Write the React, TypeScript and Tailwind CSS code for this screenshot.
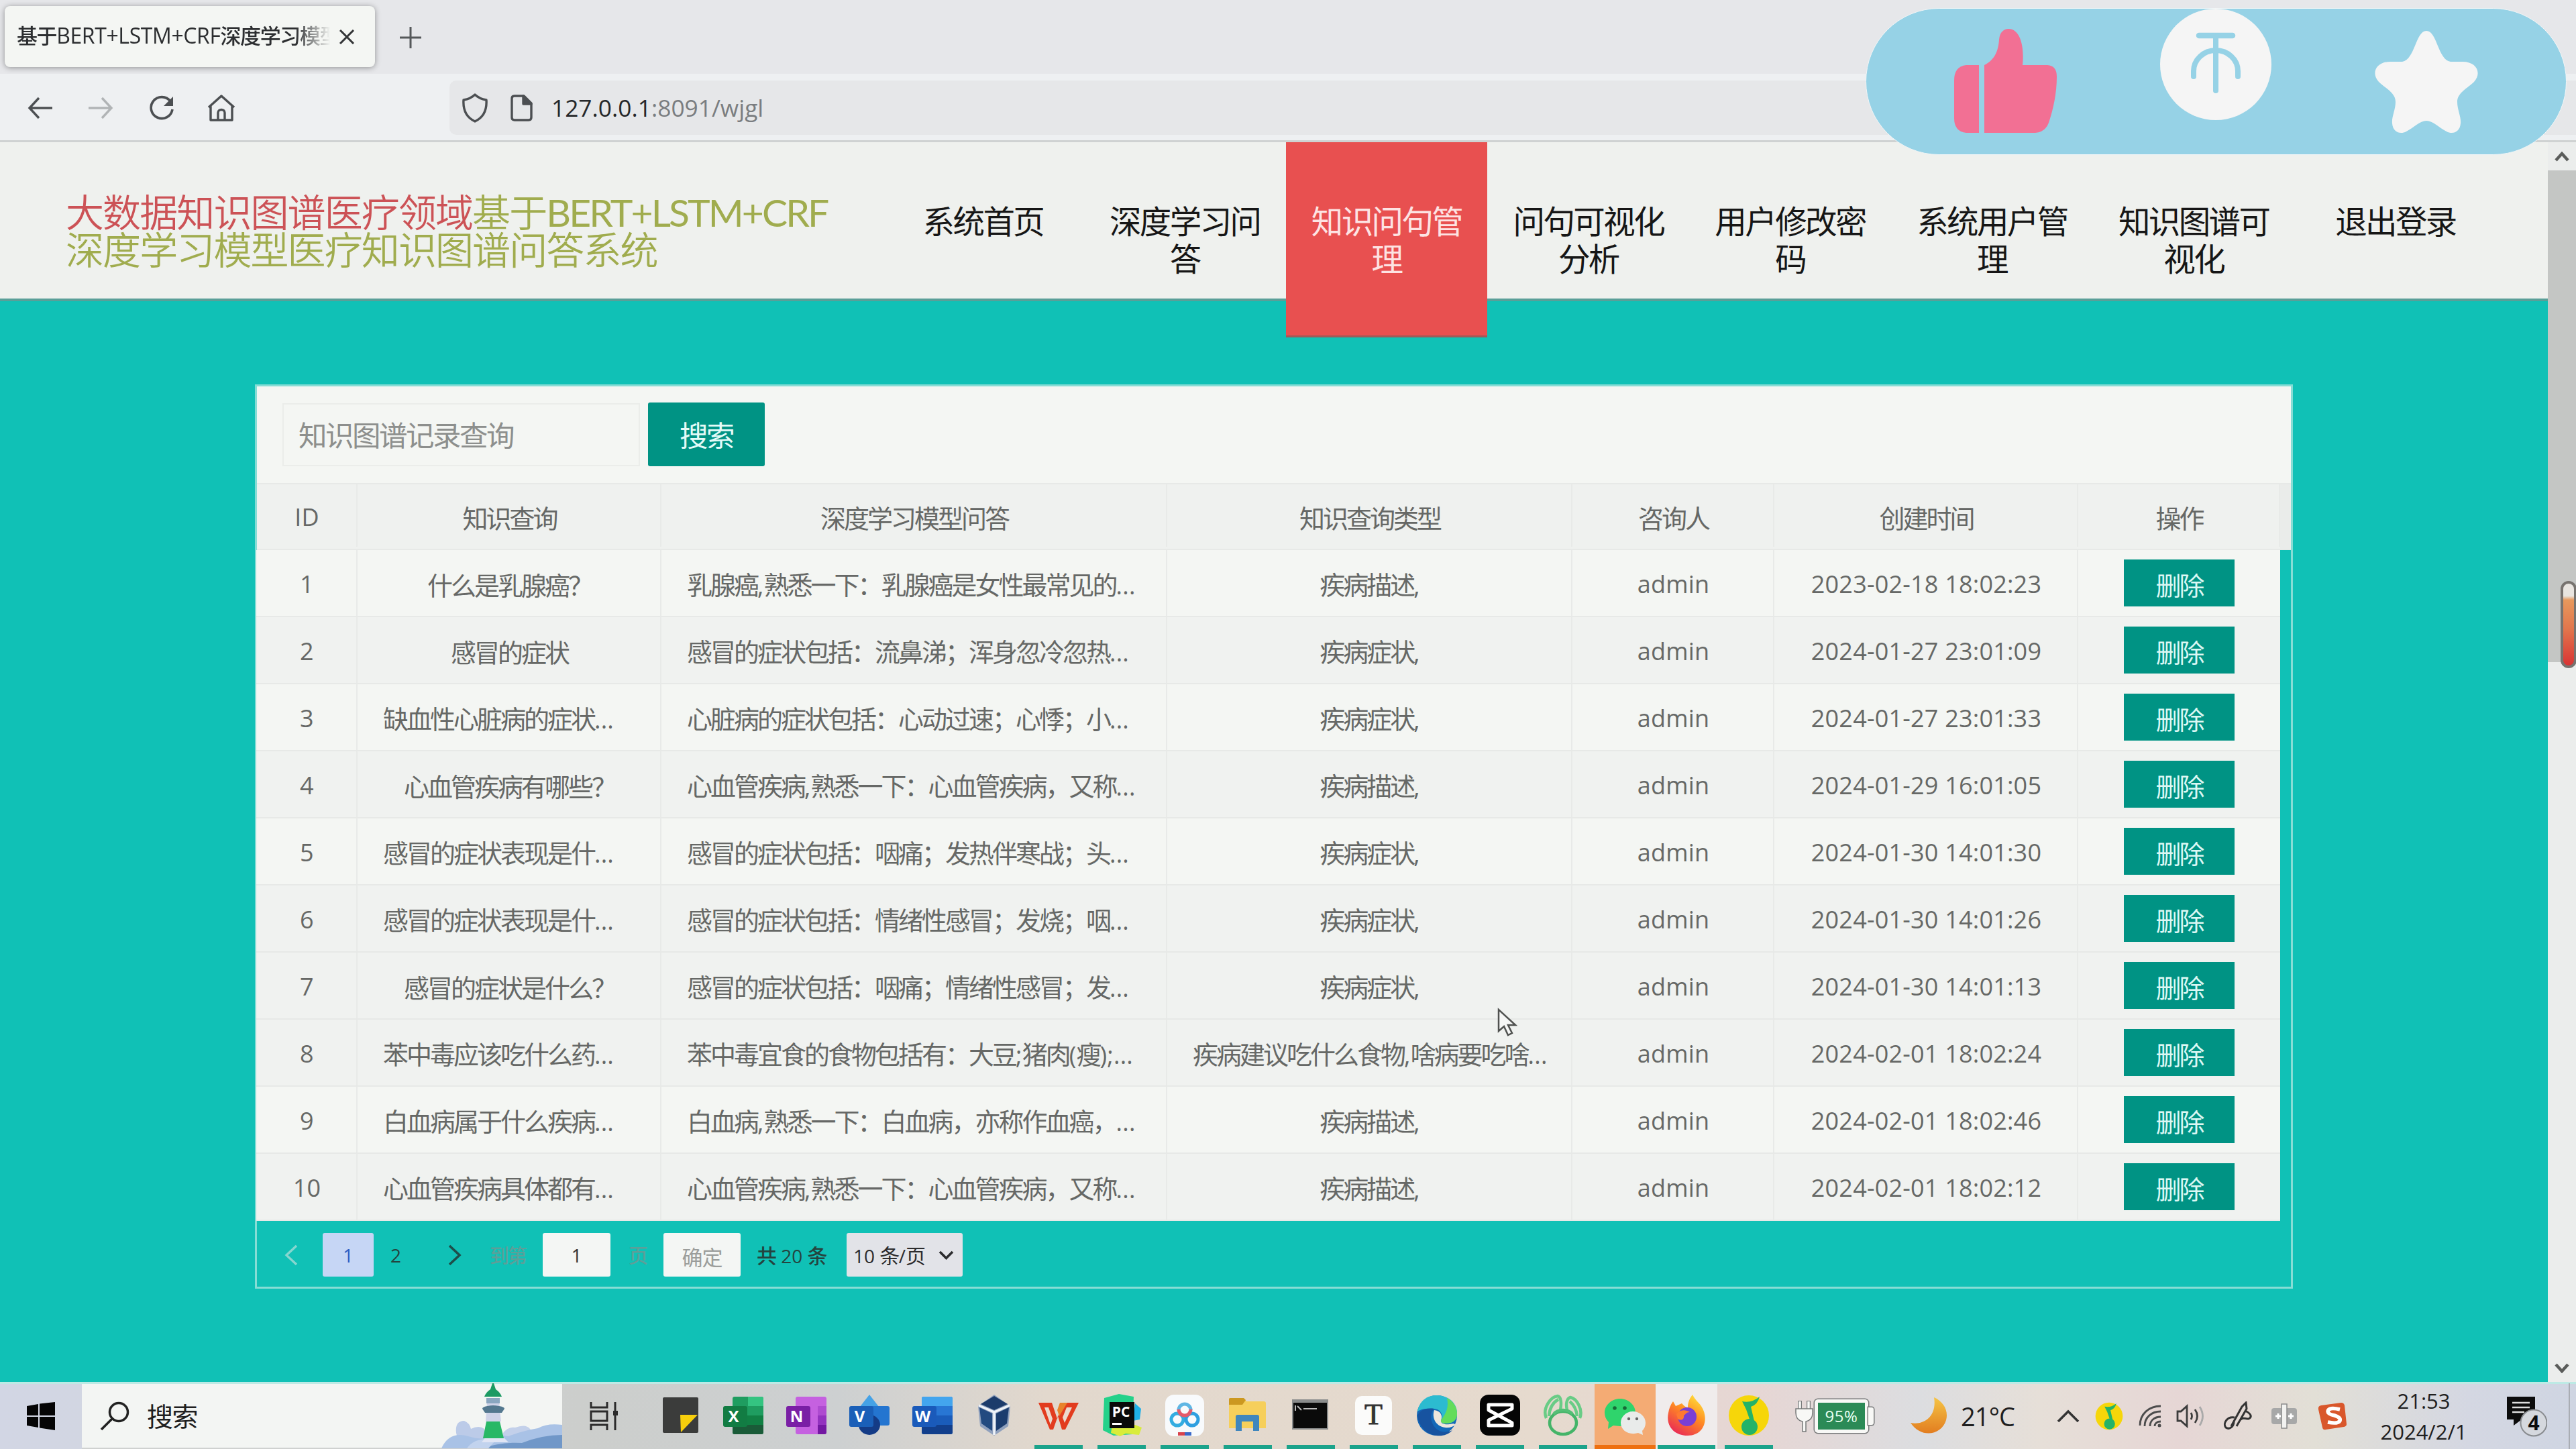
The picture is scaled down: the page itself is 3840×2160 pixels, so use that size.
import React from "react";

const CJK = "font-['Noto_Sans_CJK_SC',sans-serif]";
const LATIN = "font-['Open_Sans','Noto_Sans',sans-serif]";

/* Chinese runs are set slightly larger and tighter than the Latin runs beside them. */
function Mixed({ text, cjk, latin }: { text: string; cjk: string; latin: string }) {
  const runs = text.match(/[\x20-\x7e]+|[^\x20-\x7e]+/g) ?? [];
  return (
    <span>
      {runs.map((run, i) => (
        <span key={i} className={/^[\x20-\x7e]/.test(run) ? `${LATIN} ${latin}` : `${CJK} ${cjk}`}>
          {run}
        </span>
      ))}
    </span>
  );
}

const NAV = [
  "系统首页",
  "深度学习问答",
  "知识问句管理",
  "问句可视化分析",
  "用户修改密码",
  "系统用户管理",
  "知识图谱可视化",
  "退出登录",
];

const HEAD = ["ID", "知识查询", "深度学习模型问答", "知识查询类型", "咨询人", "创建时间", "操作"];

const ROWS: string[][] = [
  ["1", "什么是乳腺癌？", "乳腺癌,熟悉一下：乳腺癌是女性最常见的...", "疾病描述,", "admin", "2023-02-18 18:02:23"],
  ["2", "感冒的症状", "感冒的症状包括：流鼻涕；浑身忽冷忽热...", "疾病症状,", "admin", "2024-01-27 23:01:09"],
  ["3", "缺血性心脏病的症状...", "心脏病的症状包括：心动过速；心悸；小...", "疾病症状,", "admin", "2024-01-27 23:01:33"],
  ["4", "心血管疾病有哪些？", "心血管疾病,熟悉一下：心血管疾病，又称...", "疾病描述,", "admin", "2024-01-29 16:01:05"],
  ["5", "感冒的症状表现是什...", "感冒的症状包括：咽痛；发热伴寒战；头...", "疾病症状,", "admin", "2024-01-30 14:01:30"],
  ["6", "感冒的症状表现是什...", "感冒的症状包括：情绪性感冒；发烧；咽...", "疾病症状,", "admin", "2024-01-30 14:01:26"],
  ["7", "感冒的症状是什么？", "感冒的症状包括：咽痛；情绪性感冒；发...", "疾病症状,", "admin", "2024-01-30 14:01:13"],
  ["8", "苯中毒应该吃什么药...", "苯中毒宜食的食物包括有：大豆;猪肉(瘦);...", "疾病建议吃什么食物,啥病要吃啥...", "admin", "2024-02-01 18:02:24"],
  ["9", "白血病属于什么疾病...", "白血病,熟悉一下：白血病，亦称作血癌，...", "疾病描述,", "admin", "2024-02-01 18:02:46"],
  ["10", "心血管疾病具体都有...", "心血管疾病,熟悉一下：心血管疾病，又称...", "疾病描述,", "admin", "2024-02-01 18:02:12"],
];

const GRID = "grid grid-cols-[151px_453px_754px_604px_301px_453px_301px]";

function Cell({ text }: { text: string }) {
  const clipped = text.endsWith("...");
  return (
    <div
      className={`flex items-center overflow-hidden whitespace-pre border-r-2 border-[#e8eae8] pl-[38px] pr-[36px] pt-[4px] ${
        clipped ? "justify-start" : "justify-center"
      }`}
    >
      <Mixed text={text} cjk="text-[38px] tracking-[-3px]" latin="text-[36px] tracking-[0.2px]" />
    </div>
  );
}

function BrowserChrome() {
  return (
    <>
      <div className="flex h-[110px] shrink-0 items-start bg-[#e6e7ea]">
        <div className="ml-[7px] mt-[9px] flex h-[91px] w-[552px] items-center rounded-[8px] bg-[#f4f6f3] pl-[18px] shadow-[0_1px_8px_rgba(0,0,0,0.38)]">
          <div className="w-[472px] overflow-hidden whitespace-nowrap pt-[2px] font-medium leading-[60px] text-[#2c2e30] [mask-image:linear-gradient(90deg,#000_88%,transparent_99%)]">
            <Mixed text="基于BERT+LSTM+CRF深度学习模型" cjk="text-[31px] tracking-[-1.4px]" latin="text-[32px] tracking-[-0.4px]" />
          </div>
          <svg className="ml-[8px] h-[22px] w-[24px]" viewBox="0 0 24 22" fill="none" stroke="#333537" strokeWidth="3">
            <path d="M2 1 22 21M22 1 2 21" />
          </svg>
        </div>
        <svg className="ml-[37px] mt-[40px] h-[32px] w-[32px]" viewBox="0 0 32 32" fill="none" stroke="#55585a" strokeWidth="3">
          <path d="M16 0v32M0 16h32" />
        </svg>
      </div>
      <div className="flex h-[102px] shrink-0 items-center border-b-[3px] border-[#cfd2d2] bg-[#eef0f2] pt-[2px]">
        <svg className="ml-[41px] h-[34px] w-[38px]" viewBox="0 0 38 34" fill="none" stroke="#4c4f52" strokeWidth="3.4">
          <path d="M17 2 3 17l14 15M3 17h34" />
        </svg>
        <svg className="ml-[52px] h-[34px] w-[38px]" viewBox="0 0 38 34" fill="none" stroke="#b1b4b6" strokeWidth="3.4">
          <path d="M21 2l14 15-14 15M35 17H1" />
        </svg>
        <svg className="ml-[52px] h-[40px] w-[40px]" viewBox="0 0 40 40" fill="none" stroke="#4c4f52" strokeWidth="3.6">
          <path d="M33 10A16 16 0 1 0 36 22" />
          <path d="M37 3v14H23z" fill="#4c4f52" stroke="none" />
        </svg>
        <svg className="ml-[48px] h-[42px] w-[42px]" viewBox="0 0 42 42" fill="none" stroke="#4c4f52" strokeWidth="3.4" strokeLinejoin="round">
          <path d="M2 20 21 3l19 17M5 18v21h32V18M16 39V28c0-6 10-6 10 0v11" />
        </svg>
        <div className="ml-[319px] flex h-[81px] flex-1 items-center rounded-l-[10px] bg-[#e6e7e9]">
          <svg className="ml-[18px] h-[44px] w-[40px]" viewBox="0 0 40 44" fill="none" stroke="#4c4f52" strokeWidth="3.4" strokeLinejoin="round">
            <path d="M20 2c5 5 11 7 17 8 1 15-4 26-17 32C7 36 2 25 3 10c6-1 12-3 17-8z" />
          </svg>
          <svg className="ml-[32px] h-[40px] w-[34px]" viewBox="0 0 34 40" fill="none" stroke="#4c4f52" strokeWidth="3.4" strokeLinejoin="round">
            <path d="M7 2h14l11 11v21q0 4-4 4H7q-4 0-4-4V6q0-4 4-4z" />
            <path d="M20 2v12h12z" fill="#4c4f52" />
          </svg>
          <span className={`ml-[28px] text-[35.3px] leading-none text-[#25272a] ${LATIN}`}>
            127.0.0.1<span className="text-[#7a7d80]">:8091/wjgl</span>
          </span>
        </div>
      </div>
    </>
  );
}

function SiteHeader() {
  return (
    <header className="relative z-10 flex h-[237px] shrink-0 border-b-[4px] border-[#5a9f98] bg-[#eff1ee]">
      <div className="ml-[98px] mt-[73px] w-[1217px] whitespace-nowrap font-[350] leading-[56px]">
        <div className="h-[56px]">
          <span className={`text-[#cc5256] ${CJK} text-[57px] tracking-[-1.9px]`}>大数据知识图谱医疗领域</span>
          <span className="text-[#a0ac4e]">
            <span className={`${CJK} text-[57px] tracking-[-1.9px]`}>基于</span>
            <span className="font-['Lato',sans-serif] text-[57px] font-normal tracking-[-2.9px]">BERT+LSTM+CRF</span>
          </span>
        </div>
        <div className={`h-[56px] text-[#a0ac4e] ${CJK} text-[57px] tracking-[-1.9px]`}>深度学习模型医疗知识图谱问答系统</div>
      </div>
      <nav className="flex">
        {NAV.map((label) => {
          const active = label === "知识问句管理";
          return (
            <div
              key={label}
              className={`w-[300.8px] px-[34px] pt-[88px] text-center text-[47.5px] leading-[56px] tracking-[-2.6px] ${CJK} ${
                active ? "h-[291px] border-b-[3px] border-[#a05a58] bg-[#e85050] text-[#fde3e3]" : "h-[232px] text-[#161616]"
              }`}
            >
              {label}
            </div>
          );
        })}
      </nav>
    </header>
  );
}

function Pager() {
  return (
    <div className={`flex h-[99px] items-center pt-[2px] leading-none text-[#24443f] ${LATIN} text-[28px]`}>
      <svg className="ml-[41px] h-[32px] w-[20px]" viewBox="0 0 20 32" fill="none" stroke="#86d6cf" strokeWidth="3.4">
        <path d="M18 2 3 16l15 14" />
      </svg>
      <div className="ml-[37px] flex h-[65px] w-[76px] items-center justify-center rounded-[3px] bg-[#c6d6f5] text-[#2f5fc4]">1</div>
      <div className="ml-[25px] w-[18px]">2</div>
      <svg className="ml-[67px] h-[32px] w-[22px]" viewBox="0 0 22 32" fill="none" stroke="#1e4f4a" strokeWidth="3.6">
        <path d="M3 2l15 14L3 30" />
      </svg>
      <div className={`ml-[41px] w-[56px] whitespace-nowrap text-[29px] font-medium tracking-[-2px] text-[#5c9f99] ${CJK}`}>到第</div>
      <div className="ml-[23px] flex h-[65px] w-[101px] items-center justify-center rounded-[3px] bg-[#f4f6f4] text-[#333]">1</div>
      <div className={`ml-[27px] w-[30px] text-[29px] font-medium text-[#5c9f99] ${CJK}`}>页</div>
      <div className={`ml-[22px] flex h-[65px] w-[115px] items-center justify-center rounded-[3px] bg-[#f4f6f4] pt-[4px] text-[31px] tracking-[-1px] text-[#9b9d9b] ${CJK}`}>
        确定
      </div>
      <div className="ml-[24px] w-[111px] whitespace-pre font-medium">
        <Mixed text="共 20 条" cjk="text-[30px] tracking-[-1px]" latin="text-[28px]" />
      </div>
      <div className="ml-[23px] flex h-[65px] w-[173px] items-center whitespace-pre rounded-[3px] bg-[#e2e3e8] pl-[10px] text-[#2c2c2e]">
        <Mixed text="10 条/页" cjk="text-[30px] tracking-[-1.6px]" latin="text-[28px]" />
        <svg className="ml-auto mr-[13px] h-[14px] w-[23px]" viewBox="0 0 23 14" fill="none" stroke="#2c2c2e" strokeWidth="3.6">
          <path d="M2 2l9.500 9.500L21 2" />
        </svg>
      </div>
    </div>
  );
}

function Panel() {
  return (
    <section className="ml-[380px] mt-[124px] h-[1348px] w-[3038px] border-[3px] border-[#86ddd5]">
      <div className="flex h-[146px] items-start border-b-2 border-[#e7e9e7] bg-[#f4f6f3]">
        <div className={`ml-[38px] mt-[25px] flex h-[94px] w-[533px] items-center border-2 border-[#ebedea] pb-[1px] pl-[22px] text-[42.5px] leading-none tracking-[-2.5px] text-[#8d8f8d] ${CJK}`}>
          知识图谱记录查询
        </div>
        <div className={`ml-[12px] mt-[24px] flex h-[95px] w-[174px] items-center justify-center rounded-[3px] bg-[#009384] text-[42.500px] leading-none tracking-[-2.500px] text-[#e4fbf8] ${CJK}`}>
          搜索
        </div>
      </div>
      <div className="flex h-[98px] border-b-2 border-[#e7e9e7] bg-[#eff1ef] pb-[3px] leading-none text-[#666866]">
        <div className={`${GRID} -mb-[3px] -ml-px pb-[3px]`}>
          {HEAD.map((h) => (
            <Cell key={h} text={h} />
          ))}
        </div>
        <div className="-mb-[3px] flex-1 bg-[#eaecea]" />
      </div>
      {ROWS.map((row, i) => (
        <div key={row[0]} className="flex h-[100px] leading-none text-[#666866]">
          <div className={`${GRID} -ml-px border-b-2 border-[#e7e9e7] ${i % 2 === 1 || i === 6 ? "bg-[#f0f2f0]" : "bg-[#f4f6f3]"}`}>
            {row.map((c, j) => (
              <Cell key={j} text={c} />
            ))}
            <div className="flex items-center justify-center">
              <div className={`flex h-[70px] w-[165px] items-center justify-center bg-[#009384] pt-[4px] text-[38px] tracking-[-3px] text-[#dcf8f4] ${CJK}`}>删除</div>
            </div>
          </div>
        </div>
      ))}
      <Pager />
    </section>
  );
}

function PageScrollbar() {
  return (
    <div className="flex w-[42px] flex-col items-center bg-[#ebedec]">
      <div className="flex h-[42px] items-center">
        <svg className="h-[15px] w-[22px]" viewBox="0 0 22 15" fill="none" stroke="#5a5c5a" strokeWidth="4.5">
          <path d="M2 13 11 3l9 10" />
        </svg>
      </div>
      <div className="h-[733px] w-full bg-[#c4c6c4]" />
      <div className="mt-auto flex h-[42px] items-center">
        <svg className="h-[15px] w-[22px]" viewBox="0 0 22 15" fill="none" stroke="#5a5c5a" strokeWidth="4.5">
          <path d="M2 2l9 10 9-10" />
        </svg>
      </div>
    </div>
  );
}

function Tile({ letter, color }: { letter: string; color: string }) {
  return (
    <>
      <rect x="0" y="18" width="36" height="31" rx="3" fill={color} />
      <text x="15.500" y="42" textAnchor="middle" fontFamily="Open Sans, sans-serif" fontWeight="700" fontSize="24" fill="#fff">
        {letter}
      </text>
    </>
  );
}

const ICONS: { name: string; running: boolean; art: React.ReactNode }[] = [
  {
    name: "notes",
    running: false,
    art: (
      <>
        <rect x="4" y="5" width="53" height="53" rx="2" fill="#3b3c3b" />
        <path d="M30 31h26L31 57z" fill="#f7cf0c" />
      </>
    ),
  },
  {
    name: "excel",
    running: false,
    art: (
      <>
        <rect x="14" y="4" width="46" height="56" rx="3" fill="#1f9d60" />
        <path d="M37 4h20q3 0 3 3v11H37z" fill="#34c481" />
        <path d="M14 32h46v14H14z" fill="#118044" />
        <path d="M14 46h46v11q0 3-3 3H17q-3 0-3-3z" fill="#1a5b38" />
        <Tile letter="X" color="#127c43" />
      </>
    ),
  },
  {
    name: "onenote",
    running: false,
    art: (
      <>
        <rect x="14" y="4" width="46" height="56" rx="3" fill="#c561e0" />
        <path d="M47 18h13v14H47z" fill="#ae4bd0" />
        <path d="M47 32h13v14H47z" fill="#9332bf" />
        <path d="M47 46h13v11q0 3-3 3H47z" fill="#7318a2" />
        <Tile letter="N" color="#7a1fa5" />
      </>
    ),
  },
  {
    name: "visio",
    running: false,
    art: (
      <>
        <path d="M30 1 48 24 30 44 12 24z" fill="#45a2e6" />
        <rect x="30" y="18" width="30" height="29" rx="3" fill="#2475d0" />
        <ellipse cx="30" cy="46" rx="16" ry="15" fill="#143b86" />
        <Tile letter="V" color="#1a5fb8" />
      </>
    ),
  },
  {
    name: "word",
    running: false,
    art: (
      <>
        <rect x="14" y="4" width="46" height="56" rx="3" fill="#2876d4" />
        <path d="M17 4h40q3 0 3 3v11H14V7q0-3 3-3z" fill="#43a5ee" />
        <path d="M14 32h46v14H14z" fill="#1a5cba" />
        <path d="M14 46h46v11q0 3-3 3H17q-3 0-3-3z" fill="#123f8c" />
        <Tile letter="W" color="#1a5aba" />
      </>
    ),
  },
  {
    name: "virtualbox",
    running: false,
    art: (
      <>
        <path d="M4 18 28 1l24 17-3 30-21 14L7 48z" fill="#8fa0bd" />
        <path d="M28 3 48 15 28 24 8 15z" fill="#1c3b6b" />
        <path d="M6 20l19 9v26L9 44z" fill="#224a80" />
        <path d="M50 20l-19 9v26l16-11z" fill="#1b3c6e" />
        <path d="M5 17l23 10 23-10M28 27v34" fill="none" stroke="#eef2f8" strokeWidth="3.500" />
      </>
    ),
  },
  {
    name: "wps",
    running: true,
    art: (
      <>
        <path d="M0 13h20l8 24 8-24h24L40 53h-5l-6-20-7 20h-5z" fill="#e23c1f" />
        <path d="M9 20h6l6 17-3 9z" fill="#ecd9cd" />
        <path d="M42 20h8L39 43l-3-8z" fill="#ecd9cd" />
        <path d="M32 13h11L31 33l-3-9z" fill="#e8832c" />
      </>
    ),
  },
  {
    name: "pycharm",
    running: true,
    art: (
      <>
        <path d="M4 6 26 0l22 4-2 56-28 2L2 54z" fill="#24d18a" />
        <path d="M50 14l9 8-2 16-10 2z" fill="#1fb0e8" />
        <path d="M16 46h34l10 4-4 11-20-2-8 4-14-5z" fill="#d9ec3a" />
        <rect x="12" y="12" width="37" height="39" fill="#0a0a0a" />
        <text x="29" y="34" textAnchor="middle" fontFamily="Open Sans, sans-serif" fontWeight="700" fontSize="21" fill="#fff">
          PC
        </text>
        <path d="M16 43h14v3H16z" fill="#fff" />
      </>
    ),
  },
  {
    name: "netdisk",
    running: true,
    art: (
      <>
        <rect x="1" y="1" width="58" height="62" rx="13" fill="#f8fafc" />
        <g fill="none" strokeWidth="5">
          <circle cx="19" cy="38" r="9" stroke="#34ace0" />
          <circle cx="41" cy="38" r="9" stroke="#2f9fe0" />
          <path d="M21 24a9 9 0 0 1 18 0" stroke="#5fb6e4" />
          <path d="M21 23a9 9 0 0 0 18 0" stroke="#e65a6a" />
        </g>
        <path d="M20 57h10v5H20z" fill="#d8434c" />
        <path d="M30 57h10v5H30z" fill="#3a68c8" />
      </>
    ),
  },
  {
    name: "folder",
    running: true,
    art: (
      <>
        <path d="M2 8q0-2 2-2h20l4 5h26q3 0 3 3v37H2z" fill="#f6cf5b" />
        <path d="M2 8q0-2 2-2h20l3 3-5 7H2z" fill="#cc9820" />
        <path d="M12 55V34q0-3 3-3h29q3 0 3 3v21h-9V41H21v14z" fill="#3f86bd" />
      </>
    ),
  },
  {
    name: "terminal",
    running: true,
    art: (
      <>
        <rect x="2" y="8" width="54" height="45" fill="#8a8c8c" />
        <rect x="4" y="13" width="50" height="38" fill="#0a0a0a" />
        <path d="M7 17v8M10 18l6 6M19 22h20" stroke="#bbb" strokeWidth="2" fill="none" />
      </>
    ),
  },
  {
    name: "typora",
    running: true,
    art: (
      <>
        <rect x="2" y="3" width="55" height="58" rx="10" fill="#fbfbfa" />
        <text x="29.500" y="45" textAnchor="middle" fontFamily="Liberation Serif, serif" fontSize="44" fill="#333" stroke="#333">
          T
        </text>
      </>
    ),
  },
  {
    name: "edge",
    running: true,
    art: (
      <>
        <circle cx="30" cy="32" r="30" fill="#1468b8" />
        <path d="M1 26C4 10 16 1 31 2c19 1 30 14 29 28 0 9-7 14-16 14-6 0-9-2-8-5 4-6 1-16-10-17-11-1-20 0-25 4z" fill="#2cbbd0" />
        <path d="M45 6c10 5 15 14 15 24 0 9-7 14-16 14-6 0-9-2-8-5 8-10 12-20 9-33z" fill="#63dc5a" />
        <path d="M26 22c-8 8-6 26 8 33 8 3 15 1 19-1-6 7-15 9-24 8C14 60 4 48 1 34c1-9 12-14 25-12z" fill="#1753a0" />
        <path d="M26 24c-4 11 2 24 16 26 6 1 12-1 15-4 0-2-3-2-8-1-8 1-14-1-13-6 3-6 0-14-10-15z" fill="#eee6dc" />
      </>
    ),
  },
  {
    name: "capcut",
    running: true,
    art: (
      <>
        <rect x="0" y="1" width="60" height="61" rx="13" fill="#050505" />
        <path d="M48 19v-3H13v8l35 19v4H13v-8l35-17z" fill="none" stroke="#fff" strokeWidth="5" strokeLinejoin="round" />
      </>
    ),
  },
  {
    name: "green-ring",
    running: true,
    art: (
      <g fill="none" strokeWidth="4.500">
        <path d="M5 36C-1 22 11 4 22 3c5 1 6 10 4 21M9 33C10 20 16 12 23 8" stroke="#69cc86" />
        <path d="M55 36c5-12-4-29-14-31-6 2-7 10-5 19M51 33c-1-10-5-17-11-22" stroke="#69cc86" />
        <ellipse cx="30" cy="43" rx="20" ry="17" stroke="#44b468" />
        <path d="M16 30C22 22 38 22 44 30" stroke="#55bf76" />
      </g>
    ),
  },
];

function MusicNote({ className }: { className: string }) {
  return (
    <svg className={className} viewBox="0 0 60 62">
      <circle cx="30" cy="31" r="30" fill="#f6d60a" />
      <path d="M20 10q14 3 26-7-3 12-13 15l7 30h-5L26 22z" fill="#24b368" />
      <circle cx="31" cy="48" r="12" fill="#24b368" />
    </svg>
  );
}

function Lighthouse() {
  return (
    <svg className="ml-auto h-[97px] w-[180px]" viewBox="0 0 180 97">
      <path d="M22 74q-2-18 12-18 8 3 10 12 12-6 20 0l2 22H26z" fill="#bccbe8" />
      <path d="M92 74q8-10 18-8 16-6 22 2 6 6 0 12l-8 14H92z" fill="#c3d0ea" />
      <path d="M0 97q12-26 40-18 20 6 30 2 12-6 30-2 20-8 44-12 14-8 36-5v35z" fill="#a9c2e6" />
      <path d="M60 97q30-10 60-8 30-12 60-12v20z" fill="#7097c8" />
      <path d="M38 97q12-18 44-13l-12 13z" fill="#c2d3ee" />
      <path d="M66 80q14-4 28 2l6 6H60z" fill="#e0e5f4" />
      <path d="M68 27h18l3 30H66z" fill="#cfd3e8" />
      <path d="M67 57h20l6 25H62z" fill="#28b866" />
      <path d="M61 38q0-4 16-5 17 1 17 5l-4 6H65z" fill="#54788f" />
      <path d="M67 22h20v8H67z" fill="#8aa6c0" />
      <path d="M64 20q2-6 9-11l3-9h2l3 9q7 5 9 11z" fill="#1c9a63" />
    </svg>
  );
}

function Taskbar() {
  return (
    <footer className={`flex h-[101px] shrink-0 items-stretch border-t-[3px] border-[#bdeae5] bg-[linear-gradient(90deg,#d2d6e4_0px,#d2d6e2_130px,#cccecc_860px,#cdd0d1_1250px,#e2d8cd_1560px,#e6dace_2300px,#e6d6d4_2620px,#dcdde0_2860px,#e6dfd8_3040px,#e6d6d5_3250px,#e2dfd6_3450px,#d4d7e2_3680px,#cfd5e2_3840px)] text-[#1f1f1f] ${LATIN}`}>
      <div className="flex w-[122px] items-center justify-center">
        <svg className="mb-[3px] h-[42px] w-[42px]" viewBox="0 0 42 42" fill="#050505">
          <path d="M0 6l17-3v17H0zM19 2.500 42 0v20H19zM0 22h17v16L0 35zM19 22h23v20l-23-3.500z" />
        </svg>
      </div>
      <div className="flex w-[716px] items-center border-b-[3px] border-[#cfd1d0] bg-[#f3f5f3] pl-[27px]">
        <svg className="h-[44px] w-[44px]" viewBox="0 0 44 44" fill="none" stroke="#222" strokeWidth="3.500">
          <circle cx="28" cy="16" r="13.500" />
          <path d="M18 26 2 42" />
        </svg>
        <div className={`mb-[2px] ml-[26px] text-[39px] leading-none tracking-[-1.500px] ${CJK}`}>搜索</div>
        <Lighthouse />
      </div>
      <div className="flex w-[129px] items-center pl-[41px]">
        <svg className="mb-[3px] h-[42px] w-[42px]" viewBox="0 0 42 42" fill="none" stroke="#2b2b2b" strokeWidth="3">
          <path d="M2 0v8h24V0M2 42v-8h24v8M2 14h24v14H2zM38 0v42" />
          <path d="M35 13h7v7h-7z" fill="#2b2b2b" stroke="none" />
        </svg>
      </div>
      {ICONS.map((icon) => (
        <div key={icon.name} className="flex w-[94px] flex-col items-center">
          <svg className="mt-[15px] h-[64px] w-[60px] shrink-0" viewBox="0 0 60 64">
            {icon.art}
          </svg>
          {icon.running && <div className="mt-auto h-[7px] w-[72px] bg-[#1ba38b]" />}
        </div>
      ))}
      <div className="flex w-[91px] flex-col items-center bg-[#f4ab74]">
        <svg className="mt-[15px] h-[64px] w-[64px] shrink-0" viewBox="0 0 64 64">
          <path d="M24 7c13 0 23 10 23 21S37 48 24 48l-10-1-8 5 1-10C3 38 1 33 1 28 1 17 11 7 24 7z" fill="#2fd46c" />
          <circle cx="16" cy="21" r="2.800" fill="#176b38" />
          <circle cx="31" cy="21" r="2.800" fill="#176b38" />
          <path d="M43 26c11 0 19 8 19 17 0 5-2 9-5 12l1 6-7-3c-13 4-26-3-26-15 0-9 8-17 18-17z" fill="#e9ebea" />
          <circle cx="37" cy="37" r="2.200" fill="#666" />
          <circle cx="49" cy="37" r="2.200" fill="#666" />
        </svg>
        <div className="mt-auto h-[7px] w-full bg-[#ee7011]" />
      </div>
      <div className="flex w-[92px] flex-col items-center bg-[#f0ecec]">
        <svg className="mt-[15px] h-[64px] w-[58px] shrink-0" viewBox="0 0 58 64">
          <defs>
            <linearGradient id="fx" x1="0.800" y1="0" x2="0.200" y2="1">
              <stop offset="0" stopColor="#ffe33c" />
              <stop offset="0.450" stopColor="#ff8a22" />
              <stop offset="1" stopColor="#e8235a" />
            </linearGradient>
          </defs>
          <path d="M38 1c4 8 8 10 13 17 12 18 5 44-20 44C9 62-2 46 2 28c1-6 3-12 7-17l4 7 9-4c2 2 5 6 9 6 0-8 3-14 7-19z" fill="url(#fx)" />
          <circle cx="30" cy="34" r="14" fill="#7a3fd4" />
          <path d="M14 30c4-6 12-8 20-3-5 0-6 3-9 5 1 7-5 8-9 5z" fill="#ff7a30" />
        </svg>
        <div className="mt-auto h-[7px] w-[86px] bg-[#1ba38b]" />
      </div>
      <div className="flex w-[93px] flex-col items-center">
        <MusicNote className="mt-[16px] h-[62px] w-[60px] shrink-0" />
        <div className="mt-auto h-[7px] w-[72px] bg-[#1ba38b]" />
      </div>
      <div className="flex items-center pb-[3px] pl-[22px]">
        <svg className="h-[50px] w-[30px]" viewBox="0 0 30 50">
          <path d="M8 2v12M21 2v12" stroke="#77797a" strokeWidth="6" />
          <path d="M8 3v12M21 3v12" stroke="#f8f8f6" strokeWidth="3.500" />
          <path d="M2 14h25v6c0 9-5 12-10 13v15h-5V33C7 32 2 29 2 20z" fill="#f8f8f6" stroke="#77797a" strokeWidth="1.500" />
        </svg>
        <div className="flex h-[50px] w-[80px] items-center justify-center rounded-[5px] border-[5px] border-[#f8f8f6] bg-[#2b8a56] text-[24px] leading-none tracking-[0.500px] text-[#e8fff0] shadow-[0_0_0_1.500px_#77797a]">
          95%
        </div>
        <div className="h-[26px] w-[8px] rounded-r-[3px] bg-[#f8f8f6] shadow-[0_0_0_1.500px_#77797a]" />
      </div>
      <div className="ml-[54px] flex items-center pb-[3px]">
        <svg className="h-[58px] w-[56px]" viewBox="0 0 56 58">
          <defs>
            <linearGradient id="moon" x1="0" y1="0" x2="0" y2="1">
              <stop offset="0" stopColor="#f5c445" />
              <stop offset="1" stopColor="#e27d20" />
            </linearGradient>
          </defs>
          <path d="M36 1c14 6 22 20 18 34C48 56 18 64 1 39c18 4 40-8 35-38z" fill="url(#moon)" />
        </svg>
        <span className="ml-[20px] whitespace-nowrap text-[38px] leading-none tracking-[-0.900px]">21°C</span>
      </div>
      <div className="ml-auto flex items-center pb-[3px]">
        <svg className="mr-[23px] h-[20px] w-[34px]" viewBox="0 0 34 20" fill="none" stroke="#333" strokeWidth="3.500">
          <path d="M2 18 17 3l15 15" />
        </svg>
        <MusicNote className="mr-[23px] h-[42px] w-[42px]" />
        <svg className="mr-[22px] h-[36px] w-[34px]" viewBox="0 0 34 36" fill="none" stroke="#4c4c4c" strokeWidth="2.800">
          <path d="M2 32C2 15 15 3 33 3M9 33c0-13 10-22 24-22M17 33c0-8 6-14 16-14M24 33c0-4 3-7 9-7" />
          <circle cx="31" cy="32" r="2.500" fill="#4c4c4c" stroke="none" />
        </svg>
        <svg className="mr-[28px] h-[36px] w-[42px]" viewBox="0 0 42 36" fill="none" stroke="#3c3c3c" strokeWidth="2.800">
          <path d="M2 11h5l9-8v30l-9-8H2z" />
          <path d="M22 13q3 5 0 10M28 8q7 10 0 20" />
          <path d="M35 4q9 14 0 28" stroke="#aaa" />
        </svg>
        <svg className="mr-[27px] h-[44px] w-[44px]" viewBox="0 0 44 44" fill="none" stroke="#333" strokeWidth="3">
          <path d="M12 37 28 8l6-6 1 9-15 26M33 14c8 4 11 9 5 12-6 0-8-3-13 2" />
          <path d="M17 24C6 22-1 33 4 39c6 4 12-2 12-9" />
        </svg>
        <svg className="mr-[30px] h-[40px] w-[40px]" viewBox="0 0 40 40">
          <rect x="1" y="8" width="38" height="24" rx="4" fill="#a7a8a8" />
          <path d="M16 2h8v36h-8z" fill="#f2f2f0" stroke="#8a8b8b" strokeWidth="1.500" />
          <path d="M7 20h8M11 16v8M26 20h8M30 16v8" stroke="#fff" strokeWidth="3" />
        </svg>
        <svg className="mr-[48px] h-[42px] w-[44px]" viewBox="0 0 44 42">
          <path d="M5 5 35 1q4 0 5 4l3 28q0 3-4 4L12 41q-4 1-5-3L1 11q-1-5 4-6z" fill="#d9572b" />
          <path d="M33 11q-17-4-18 3 0 4 10 6 10 3 8 8-3 5-18 2" fill="none" stroke="#fff" strokeWidth="5.500" />
        </svg>
        <div className="flex w-[132px] flex-col items-center whitespace-nowrap text-[31px] leading-[46px]">
          <span>21:53</span>
          <span>2024/2/1</span>
        </div>
        <div className="ml-[58px] mr-[32px] h-[62px] w-[60px]">
          <svg className="h-[62px] w-[60px]" viewBox="0 0 60 62">
            <path d="M0 2h42v34H22l-12 9v-9H0z" fill="#0c0c0c" />
            <path d="M8 11h26M8 18h26M8 25h18" stroke="#ddd" strokeWidth="2.500" />
            <circle cx="40" cy="41" r="19.500" fill="#d5d8de" stroke="#888b8f" strokeWidth="2" />
            <text x="40" y="52" textAnchor="middle" fontFamily="Open Sans, sans-serif" fontWeight="700" fontSize="30" fill="#0c0c0c">
              4
            </text>
          </svg>
        </div>
        <div className="h-[98px] w-[11px] border-l-2 border-[#a9adb4]" />
      </div>
    </footer>
  );
}

/* Floating like / coin / favourite sticker over the top-right corner. */
function Sticker() {
  return (
    <div className="absolute left-[2781px] top-[12px] z-20 h-[219px] w-[1045px] rounded-full border border-[#f3f6f7] bg-[#96d2e6]">
      <svg className="h-[217px] w-[1043px]" viewBox="2782 13 1043 217">
        <g fill="#f27094">
          <path d="M2931 97h19v101h-19q-18-2-18-22v-56q0-21 18-23z" />
          <path d="M2958 97c16-8 21-22 22-38 1-11 7-16 14-16 17 0 24 25 21 54h37q14 1 14 17c0 25-5 48-12 69q-5 14-20 15h-76z" />
        </g>
        <circle cx="3303" cy="96" r="83" fill="#f5f5f5" />
        <g fill="none" stroke="#96d2e6" strokeLinecap="round">
          <path d="M3278 53h50" strokeWidth="8.500" />
          <path d="M3303 55v80" strokeWidth="8" />
          <path d="M3270 114v-8a33 31 0 0 1 66 0v8" strokeWidth="8" />
        </g>
        <path
          d="M3617 46c16 0 17 43 36 46h18c21 0 29 17 17 30-9 9-25 16-25 30 0 12 6 22 5 32-1 13-12 17-21 12-12-6-20-16-30-16s-18 10-30 16c-9 5-20 1-21-12-1-10 5-20 5-32 0-14-16-21-25-30-12-13-4-30 17-30h18c19-3 20-46 36-46z"
          fill="#f5f5f5"
        />
      </svg>
    </div>
  );
}

export default function App() {
  return (
    <div className="relative flex h-[2160px] w-[3840px] flex-col overflow-hidden bg-[#10c1b6]">
      <BrowserChrome />
      <div className="flex h-[1848px] shrink-0">
        <main className="flex w-[3798px] flex-col bg-[#10c1b6]">
          <SiteHeader />
          <Panel />
        </main>
        <PageScrollbar />
      </div>
      <Taskbar />
      <Sticker />
      <div className="absolute left-[3817px] top-[866px] h-[130px] w-[24px] rounded-full border-[4px] border-[#77736f] bg-[linear-gradient(180deg,#e9e5e0_0%,#e9e5e0_15%,#e8985c_20%,#e2764c_55%,#d93434_100%)]" />
      <svg className="absolute left-[2232px] top-[1502px] h-[43px] w-[30px]" viewBox="0 0 30 43" fill="#f6f7f6" stroke="#505250" strokeWidth="2.500">
        <path d="M2 3v32l8-7 6 13 6-3-6-12h11z" />
      </svg>
    </div>
  );
}
